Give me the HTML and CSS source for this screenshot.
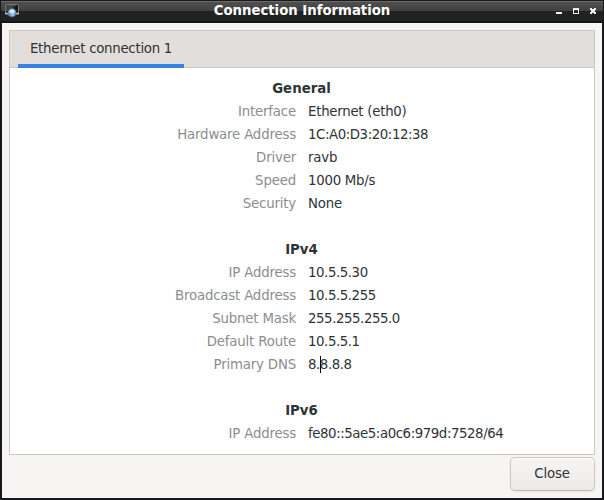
FILE: index.html
```html
<!DOCTYPE html>
<html lang="en">
<head>
<meta charset="utf-8">
<title>Connection Information</title>
<link rel="stylesheet" href="styles.css">
</head>
<body>
<div class="window">
  <header class="titlebar">
    <svg class="app-icon" width="16" height="16" viewBox="0 0 16 16">
      <rect x=".5" y=".5" width="13" height="10" rx="1" fill="#191a18" stroke="#777873"/>
      <path d="M1 1h11L1 8z" fill="#44463f"/>
      <path d="M0 9.5h14" stroke="#d5d8d5" stroke-width="1.2"/>
      <circle cx="7" cy="8.7" r="4.3" fill="#6f9fd2" stroke="#3d669a" stroke-width=".7"/>
      <path d="M4 7l3-2 2 1 1 2-2 2-3-1zM6 11l3-1-1 2z" fill="#d5e6f5"/>
    </svg>
    <h1 class="title">Connection Information</h1>
    <svg class="controls" width="42" height="8" viewBox="0 0 42 8" shape-rendering="crispEdges" fill="#eee">
      <path d="M0 5h6v2H0z"/>
      <path fill-rule="evenodd" d="M17 1h6v6h-6zM18 3v3h4V3z"/>
      <path d="M34 1h2v1h2V1h2v2h-1v2h1v2h-2V6h-2v1h-2V5h1V3h-1z"/>
    </svg>
  </header>
  <main class="content">
    <section class="notebook">
      <nav class="tabs"><div class="tab">Ethernet connection 1</div></nav>
      <div class="page">
        <h2>General</h2>
        <dl>
          <dt>Interface</dt><dd class="name">Ethernet (eth0)</dd>
          <dt>Hardware Address</dt><dd class="address">1C:A0:D3:20:12:38</dd>
          <dt>Driver</dt><dd>ravb</dd>
          <dt>Speed</dt><dd class="name">1000 Mb/s</dd>
          <dt>Security</dt><dd>None</dd>
        </dl>
        <h2>IPv4</h2>
        <dl>
          <dt>IP Address</dt><dd class="address">10.5.5.30</dd>
          <dt>Broadcast Address</dt><dd class="address">10.5.5.255</dd>
          <dt>Subnet Mask</dt><dd class="address">255.255.255.0</dd>
          <dt>Default Route</dt><dd class="address">10.5.5.1</dd>
          <dt>Primary DNS</dt><dd class="address">8.<span class="caret"></span>8.8.8</dd>
        </dl>
        <h2>IPv6</h2>
        <dl>
          <dt>IP Address</dt><dd class="address">fe80::5ae5:a0c6:979d:7528/64</dd>
        </dl>
      </div>
    </section>
    <button class="close">Close</button>
  </main>
</div>
</body>
</html>
```

FILE: styles.css
```css
* { box-sizing: border-box; }
body {
  margin: 0;
  font: 13.333px/23px "DejaVu Sans", sans-serif;
  letter-spacing: -0.18px;
  color: #2e3436;
}
.window {
  width: 604px;
  height: 500px;
  display: flex;
  flex-direction: column;
  background: #f6f5f4;
  border: solid #17181b;
  border-width: 0 2px 2px;
}
.titlebar {
  height: 23px;
  flex: none;
  margin: 0 -2px;
  padding: 0 5px 0 4px;
  display: grid;
  grid-template-columns: 42px 1fr 42px;
  border: 1px solid #191919;
  border-bottom: 2px solid #151515;
  background: linear-gradient(#6a6a6a 0 1px, #505050 1px, #404040 10px, #212222 10px, #202121 100%);
}
.app-icon { margin-top: 3px; }
.title {
  margin: 0;
  padding-left: 1px;
  color: #fff;
  font: bold 13.25px/19px "DejaVu Sans", sans-serif;
  letter-spacing: 0;
  text-align: center;
}
.controls { margin-top: 6px; }
.content {
  flex: 1;
  display: flex;
  flex-direction: column;
  padding: 7px 7px 7px;
}
.notebook {
  height: 425px;
  flex: none;
  background: #fff;
  border: 1px solid #cdc7c2;
}
.tabs {
  height: 37px;
  padding-left: 8px;
  background: #e1dedb;
  border-bottom: 1px solid #cdc7c2;
}
.tab {
  width: 166px;
  height: 37px;
  line-height: 35px;
  letter-spacing: -0.27px;
  text-align: center;
  border-bottom: 4px solid #3584e4;
}
.page { padding-top: 9px; }
h2 {
  margin: 0;
  padding-right: 1px;
  font: bold 13.333px/23px "DejaVu Sans", sans-serif;
  letter-spacing: 0;
  text-align: center;
}
dl {
  margin: 0 0 23px;
  display: grid;
  grid-template-columns: 286px 1fr;
  column-gap: 12px;
}
dt { text-align: right; color: #8b8e8f; }
dd { margin: 0; }
.name { letter-spacing: -0.26px; }
.address { letter-spacing: -0.43px; }
.caret {
  display: inline-block;
  width: 1px;
  height: 17px;
  margin-right: -1px;
  vertical-align: -4px;
  background: #000;
}
.close {
  align-self: flex-end;
  flex: none;
  width: 85px;
  height: 34px;
  margin-top: 2px;
  padding: 0 1px 2px 0;
  font: inherit;
  letter-spacing: -0.15px;
  color: inherit;
  border: 1px solid #cdc7c2;
  border-bottom-color: #bfb8b1;
  border-radius: 5px;
  background: linear-gradient(#f6f5f4, #edebe9);
  box-shadow: 0 1px 2px rgba(0, 0, 0, .07), inset 0 1px #fff;
}
```
